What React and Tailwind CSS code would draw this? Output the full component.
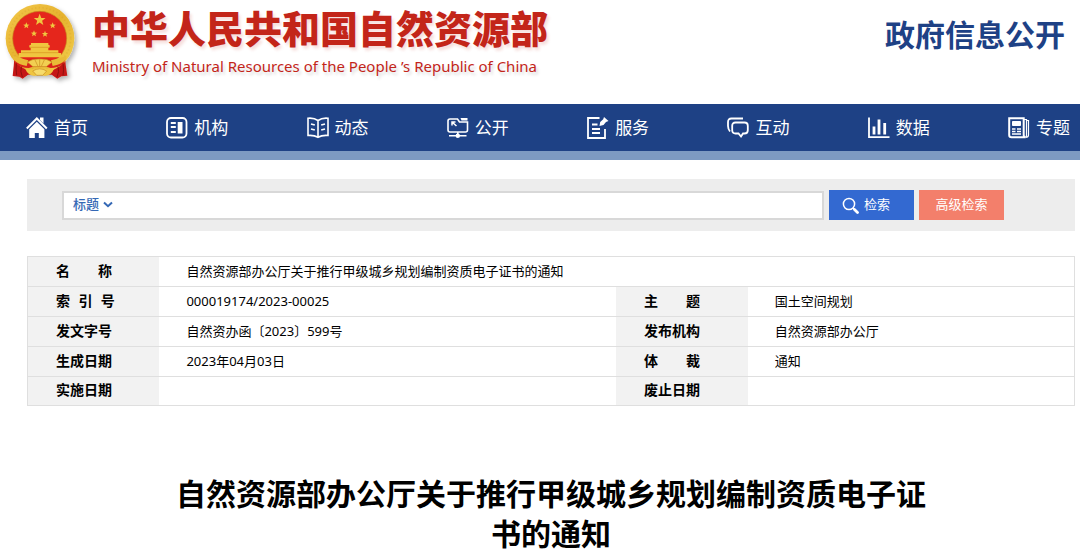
import React, { useState } from "react";

const navItems = [
  { label: "首页", icon: HomeIcon },
  { label: "机构", icon: OrgIcon },
  { label: "动态", icon: BookIcon },
  { label: "公开", icon: OpenIcon },
  { label: "服务", icon: ServiceIcon },
  { label: "互动", icon: ChatIcon },
  { label: "数据", icon: ChartIcon },
  { label: "专题", icon: NewsIcon },
];

const title = "自然资源部办公厅关于推行甲级城乡规划编制资质电子证书的通知";

const rows = [
  ["索\u2002\u200a引\u2002\u200a号", "000019174/2023-00025", "主\u3000\u3000题", "国土空间规划"],
  ["发文字号", "自然资办函〔2023〕599号", "发布机构", "自然资源部办公厅"],
  ["生成日期", "2023年04月03日", "体\u3000\u3000裁", "通知"],
  ["实施日期", "", "废止日期", ""],
];

export default function App() {
  return (
    <div className="min-h-screen overflow-hidden bg-white font-['Noto_Sans','Noto_Sans_CJK_SC',sans-serif] text-black">
      <Header />
      <NavBar />
      <main className="mt-[19px] mr-[5px] ml-[27px]">
        <SearchBar />
        <InfoTable />
        <h1 className="mt-[68px] px-[140px] text-center text-[30px] leading-10 font-bold">{title}</h1>
      </main>
    </div>
  );
}

function Header() {
  return (
    <header className="flex h-[104px] items-start justify-between pr-[15px]">
      <a href="#" className="flex items-start text-[#c32519]">
        <Emblem />
        <span className="ml-0.5 block pt-1.5">
          <span className="block text-[38px] leading-[44px] font-black [text-shadow:2px_3px_3px_rgba(195,37,25,0.15)]">
            中华人民共和国自然资源部
          </span>
          <span className="block text-[15px] leading-8 [text-shadow:2px_3px_3px_rgba(0,0,0,0.15)]">
            Ministry of Natural Resources of the People ’s Republic of China
          </span>
        </span>
      </a>
      <p className="mt-[15px] text-[30px] leading-10 font-bold text-[#1e4185]">政府信息公开</p>
    </header>
  );
}

function NavBar() {
  return (
    <nav className="border-b-[9px] border-[#7d9ac2] bg-[#1e4185]">
      <ul className="flex h-[47px] items-center justify-between pr-[10px] pl-[26px]">
        {navItems.map(({ label, icon: Icon }) => (
          <li key={label}>
            <a href="#" className="flex items-center gap-1.5 text-[17px] leading-6 whitespace-nowrap text-white">
              <Icon />
              {label}
            </a>
          </li>
        ))}
      </ul>
    </nav>
  );
}

function SearchBar() {
  const [keyword, setKeyword] = useState("");

  return (
    <form
      className="flex h-[52px] items-center gap-[5px] bg-[#ededed] pr-[71px] pl-[35px] text-[13px]"
      onSubmit={(e) => e.preventDefault()}
    >
      <div className="flex h-[29px] min-w-0 flex-1 items-center border-2 border-[#d8d8d8] bg-white pl-[9px]">
        <div className="relative flex items-center">
          <select
            aria-label="检索范围"
            className="h-6 w-10 appearance-none bg-transparent font-medium text-[#3468b5] outline-none"
          >
            <option>标题</option>
          </select>
          <svg className="pointer-events-none absolute right-0 h-2 w-2.5" viewBox="0 0 10 8" fill="none">
            <path d="M1 1.500 5 5.200 9 1.500" stroke="#3468b5" strokeWidth="2" />
          </svg>
        </div>
        <input
          type="text"
          aria-label="检索词"
          value={keyword}
          onChange={(e) => setKeyword(e.target.value)}
          className="h-6 min-w-0 flex-1 px-2 outline-none"
        />
      </div>
      <button type="submit" className="flex h-[30px] w-[85px] items-center gap-[5px] bg-[#3369d1] pl-[13px] text-white">
        <svg className="h-[17px] w-[17px]" viewBox="0 0 17 17" fill="none" stroke="currentColor">
          <circle cx="7" cy="7" r="5.600" strokeWidth="1.500" />
          <path d="m11 11 1.500 1.500" strokeWidth="1.500" />
          <path d="m12.500 12.500 3 3" strokeWidth="2.800" strokeLinecap="round" />
        </svg>
        检索
      </button>
      <button type="button" className="h-[30px] w-[85px] bg-[#f37f6b] text-white">
        高级检索
      </button>
    </form>
  );
}

function InfoTable() {
  return (
    <table className="mt-[25px] w-full table-fixed border-collapse border border-[#dfdfdf] text-left text-[13px] leading-5">
      <colgroup>
        <col className="w-[12.6%]" />
        <col className="w-[43.6%]" />
        <col className="w-[12.6%]" />
        <col />
      </colgroup>
      <tbody>
        <tr className="h-[30px] border-b border-[#dfdfdf]">
          <Label>{"名\u3000\u3000称"}</Label>
          <Value colSpan={3}>{title}</Value>
        </tr>
        {rows.map(([label, value, label2, value2]) => (
          <tr key={label} className="h-[30px] border-b border-[#dfdfdf] last:h-[29px]">
            <Label>{label}</Label>
            <Value>{value}</Value>
            <Label>{label2}</Label>
            <Value>{value2}</Value>
          </tr>
        ))}
      </tbody>
    </table>
  );
}

function Label({ children }) {
  return (
    <th scope="row" className="bg-[#f2f2f2] pb-0.5 pl-7 text-sm font-bold whitespace-pre">
      {children}
    </th>
  );
}

function Value({ children, colSpan }) {
  return (
    <td colSpan={colSpan} className="pb-0.5 pl-[27px]">
      {children}
    </td>
  );
}

function Emblem() {
  const star = "M0-10 2.600-3.200 9.500-3.100 4 1.200 5.900 8.100 0 4.200-5.900 8.100-4 1.200-9.500-3.100-2.600-3.200Z";
  return (
    <svg className="h-[95px] w-[90px]" viewBox="0 0 270 285">
      <defs>
        <linearGradient id="gold" x1="0" y1="0" x2="1" y2="1">
          <stop offset="0" stopColor="#f3c94c" />
          <stop offset="0.5" stopColor="#e6b22e" />
          <stop offset="1" stopColor="#f2d04f" />
        </linearGradient>
        <filter id="shade" x="-20%" y="-20%" width="150%" height="150%">
          <feDropShadow dx="7" dy="8" stdDeviation="6" floodOpacity="0.3" />
        </filter>
      </defs>
      <g filter="url(#shade)">
        <path d="M44 160Q42 195 38 228l20 2 10 6 16-12h71l17 12 12-7 18-2Q196 195 194 160Z" fill="#c51814" />
        <circle cx="120" cy="115" r="103" fill="url(#gold)" />
        <circle cx="120" cy="115" r="92" fill="none" stroke="#cf941e" strokeWidth="5" strokeDasharray="4 7" opacity="0.25" />
        <circle cx="119" cy="115" r="81" fill="#e5261d" stroke="#c9851d" strokeWidth="2" />
      </g>
      <g fill="#f0c63f">
        <path d={star} transform="translate(119 60) scale(1.850)" />
        <path d={star} transform="translate(79 77)" />
        <path d={star} transform="translate(158 77)" />
        <path d={star} transform="translate(102 101)" />
        <path d={star} transform="translate(135 102)" />
        <path d="M93 129h52v5l4 2v6l-4 2v7h30v8h8v13H56v-13h7v-8h29v-7l-4-2v-6l5-2Z" />
      </g>
      <path d="M90 142h58M64 158h110" stroke="#d8931e" strokeWidth="2" />
      <path d="M42 178q20 2 43 2 14-9 34-4 21-5 34 4 22 0 43-2l-6 14q-18 12-38 12-18-6-33-2-15-4-33 2-22 0-38-12Z" fill="#d9231a" />
      <path d="M39 168q22 7 46 13l-5 17q-26-4-41-21ZM199 168q-22 7-46 13l5 17q26-4 41-21Z" fill="#e9bb37" />
      <path d="M82 186q16-11 37-9 21-2 37 9l-17 14H99Z" fill="#f2cf52" stroke="#c98c1c" strokeWidth="2" />
      <path d="m119 178v21m-14-19 9 19m19-19-9 19" stroke="#c98c1c" strokeWidth="2" />
      <path d="M76 207q23 4 43-5 20 9 43 5-7 18-27 21l-16-4-16 4q-20-3-27-21Z" fill="#efc541" />
      <path d="M98 213q21-13 42 0l-12 13h-18Z" fill="#f7dc6d" stroke="#c98c1c" strokeWidth="2" />
      <path d="M49 190q-2 17 1 36m14-26q-4 14 3 31m122-41q3 20 0 36m-15-26q5 14-3 31" fill="none" stroke="#8e100d" strokeWidth="3" />
    </svg>
  );
}

function NavIcon({ children }) {
  return (
    <svg
      className="h-[22px] w-[22px] shrink-0"
      viewBox="0 0 22 22"
      fill="none"
      stroke="currentColor"
      strokeWidth="1.6"
      aria-hidden="true"
    >
      {children}
    </svg>
  );
}

function HomeIcon() {
  return (
    <NavIcon>
      <path d="M.8 11.500 10.800 1.500 20.800 11.500" strokeWidth="2" />
      <path d="M14 .5h3.500v6L14 3Z" fill="currentColor" stroke="none" />
      <path d="M3.200 12.300 10.800 4.800l7.600 7.500V21h-5.600v-5H8.800v5H3.200Z" fill="currentColor" stroke="none" />
    </NavIcon>
  );
}

function OrgIcon() {
  return (
    <NavIcon>
      <rect x="1" y="1" width="19.500" height="19.500" rx="4" strokeWidth="1.800" />
      <path d="M4.800 6h5M4.800 10h5M4.800 15h5" strokeWidth="1.800" />
      <path d="M11.700 5h4.800v11.500h-4.800Z" fill="currentColor" stroke="none" />
    </NavIcon>
  );
}

function BookIcon() {
  return (
    <NavIcon>
      <path d="M11 3.500Q7 .6 1 1.200v17.300q6-.5 10 1.800 4-2.300 10-1.800V1.200Q15 .6 11 3.500ZM11 3.500v16.500" />
      <path d="m4 7 3.800 1M4 12l3.800 1M18 7l-3.800 1M18 12l-3.800 1" strokeWidth="1.800" />
    </NavIcon>
  );
}

function OpenIcon() {
  return (
    <NavIcon>
      <path d="M10.500 2H3Q1 2 1 4v9q0 2 2 2h15.500q2 0 2-2V5H12.500Z" />
      <path d="M13.500 1h7v2.500h-6Z" fill="currentColor" stroke="none" />
      <path d="m5 5 4.500 4M5 8.500V5h3.500" strokeWidth="1.500" />
      <path d="M2 18.700h17.500M10.800 15v4" />
      <circle cx="10.800" cy="18.700" r="2.200" fill="currentColor" stroke="none" />
    </NavIcon>
  );
}

function ServiceIcon() {
  return (
    <NavIcon>
      <path d="M12.500 1H1v20h17V12" strokeWidth="1.800" />
      <path d="M5 7.500h5.500M5 12h8M5 16h8" strokeWidth="1.800" />
      <path d="m12.500 9 .7-4 3-2.700.8-2.300 4.500 4-2.500 1-2.500 3Z" fill="currentColor" stroke="none" />
    </NavIcon>
  );
}

function ChatIcon() {
  return (
    <NavIcon>
      <path d="M3 14.500Q1 12 1 9V5q0-3.500 3.500-3.500H16" strokeWidth="1.800" />
      <path d="M8.500 5.500h9q3.300 0 3.300 3.300v4.400q0 3.300-3.300 3.300h-1.500l-2 3-2.500-3h-3q-3.300 0-3.300-3.300V8.800q0-3.300 3.300-3.300Z" strokeWidth="1.800" />
    </NavIcon>
  );
}

function ChartIcon() {
  return (
    <NavIcon>
      <path d="M1 .5v19.700h20.500" strokeWidth="1.800" />
      <path d="M6 9.500v8M11 2.500v15M16.700 6v11.500" strokeWidth="2.800" />
    </NavIcon>
  );
}

function NewsIcon() {
  return (
    <NavIcon>
      <path d="M1.200 1.200h14.500V18q0 2.300 2 2.300H3.500q-2.300 0-2.300-2.300Z" strokeWidth="2" />
      <path d="M16 2.500h2.500V18q0 2-1 2.300M18.500 3.500h2V18q0 2.300-2.800 2.300" strokeWidth="1.200" />
      <path d="M4.500 4.500h8v4h-8Z" fill="currentColor" strokeWidth="1" />
      <path d="M4 12h3.500M9 12h4M4 14.500h3.500M9 14.500h4M4 17h9" strokeWidth="1.300" />
    </NavIcon>
  );
}
